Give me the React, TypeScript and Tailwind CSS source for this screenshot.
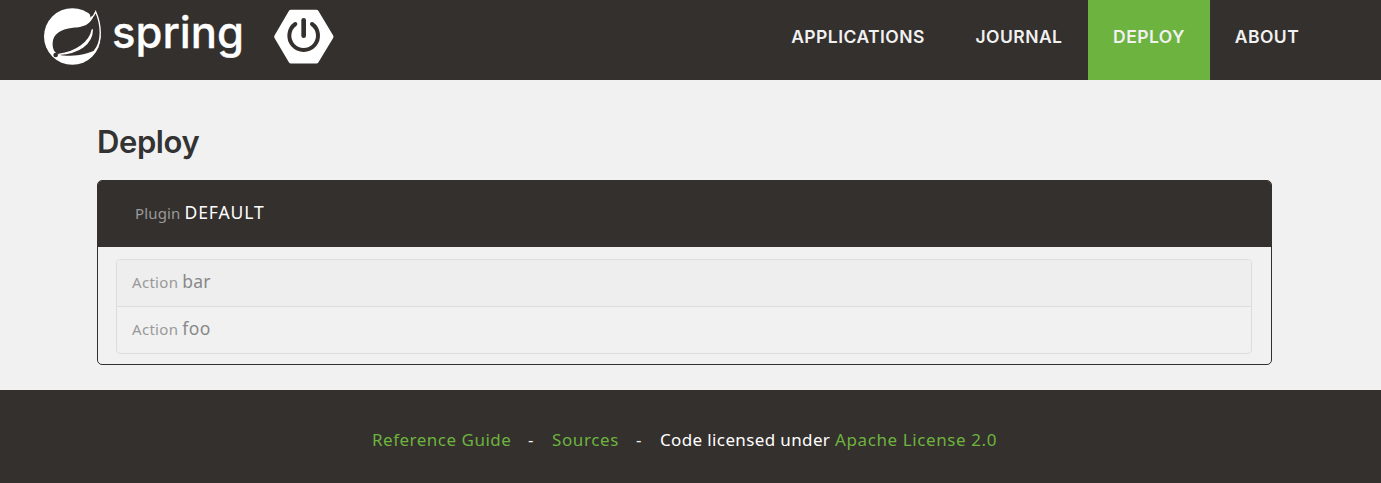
import React from 'react';

const navItems = [
  { label: 'APPLICATIONS', box: 'w-[184px]' },
  { label: 'JOURNAL', box: 'w-[138px]' },
  { label: 'DEPLOY', box: 'w-[122px] bg-[#6db33f]' },
  { label: 'ABOUT', box: 'w-[114px]' },
];

function SpringLeaf() {
  return (
    <svg className="h-[70px] w-[70px]" viewBox="0 0 210 210" aria-hidden="true">
      <circle cx="103" cy="103.500" r="85" fill="#fff" />
      <path d="M150 15H210V170H166Q190 137 189 101Q186 58 173 26L158 47Z" fill="#34302d" />
      <path
        d="M173 29C157 73 135 74 105 77C65 81 46 97 44 122C43 137 48 148 55 153C62 159 76 163 105 163C137 163 158 158 169 147C194 119 190 67 173 29Z"
        fill="#34302d"
      />
      <path
        d="M158 50Q168 42 173 29C190 67 194 119 169 147"
        fill="none"
        stroke="#fff"
        strokeWidth="4"
      />
      <path d="M163 82C156 120 115 151 62 157C122 154 163 126 163 82Z" fill="#fff" stroke="#fff" strokeWidth="4" />
      <path d="M66 161C97 162 134 163 171 145Q158 166 140 174L80 174Z" fill="#fff" />
      <circle cx="53" cy="159" r="7" fill="#34302d" />
    </svg>
  );
}

function BootMark() {
  return (
    <svg className="h-[70px] w-[72px]" viewBox="0 0 216 210" aria-hidden="true">
      <path
        d="M69 31H145L189 104L145 177H69L26 104Z"
        fill="#fff"
        stroke="#fff"
        strokeWidth="15"
        strokeLinejoin="round"
      />
      <path d="M82 66A43 43 0 1 0 132 66" fill="none" stroke="#34302d" strokeWidth="12" strokeLinecap="round" />
      <path d="M107 55V101" stroke="#34302d" strokeWidth="14" strokeLinecap="round" />
    </svg>
  );
}

function Header() {
  return (
    <header className="flex h-20 items-start justify-between bg-[#34302d] pr-[57px] pl-[38px]">
      <div className="flex pt-0.5">
        <SpringLeaf />
        <svg className="h-[70px] w-[160px]" viewBox="0 0 160 70">
          <text
            x="4"
            y="46"
            textLength="132"
            lengthAdjust="spacingAndGlyphs"
            fill="#fff"
            stroke="#fff"
            strokeWidth="0.3"
            strokeLinejoin="round"
            className="font-['Inter',sans-serif] text-[44px] font-medium"
          >
            spring
          </text>
        </svg>
        <BootMark />
      </div>
      <nav className="flex h-20 font-['Inter',sans-serif] text-[17.5px] font-semibold text-[#f1f1f1]">
        {navItems.map((item) => (
          <a key={item.label} className={`flex justify-center pt-[23px] leading-7 whitespace-nowrap ${item.box}`}>
            <span className="tracking-[0.45px]">{item.label}</span>
          </a>
        ))}
      </nav>
    </header>
  );
}

export default function App() {
  return (
    <div className="flex h-[483px] flex-col bg-[#f1f1f1] font-['Noto_Sans',sans-serif]">
      <Header />
      <main className="h-[310px] px-[97px] pt-[42px]">
        <h1 className="h-[58px] font-['Inter',sans-serif] text-[31px] leading-10 font-semibold tracking-[-0.4px] text-[#333]">Deploy</h1>
        <section className="h-[185px] w-[1175px] overflow-hidden rounded-[5px] border border-[#34302d]">
          <div className="flex h-[66px] items-baseline gap-1 bg-[#34302d] pt-[17px] pl-[37px] leading-7">
            <span className="text-[15px] tracking-[0.15px] text-[#999]">Plugin</span>
            <span className="text-[17.5px] tracking-[0.9px] text-white">DEFAULT</span>
          </div>
          <ul className="mt-3 ml-[18px] w-[1136px] overflow-hidden rounded border border-[#ddd] text-[#888]">
            <li className="flex h-[47px] items-baseline gap-1 border-b border-[#ddd] bg-[#eee] pt-[7px] pl-[15px] leading-7">
              <span className="text-[15px] tracking-[0.3px] text-[#999]">Action</span>
              <span className="text-[17.5px] tracking-[0.2px]">bar</span>
            </li>
            <li className="flex h-[46px] items-baseline gap-1 pt-[7px] pl-[15px] leading-7">
              <span className="text-[15px] tracking-[0.3px] text-[#999]">Action</span>
              <span className="text-[17.5px] tracking-[0.4px]">foo</span>
            </li>
          </ul>
        </section>
      </main>
      <footer className="flex h-[93px] bg-[#34302d] pt-9 pl-[372px] text-[17px] leading-7 whitespace-nowrap text-[#f1f1f1]">
        <a className="w-[156px] tracking-[0.5px] text-[#6db33f]">Reference Guide</a>
        <span className="w-6">-</span>
        <a className="w-[84px] tracking-[0.6px] text-[#6db33f]">Sources</a>
        <span className="w-6">-</span>
        <span className="w-[175px] tracking-[0.37px] text-white">Code licensed under</span>
        <a className="tracking-[0.6px] text-[#6db33f]">Apache License 2.0</a>
      </footer>
    </div>
  );
}
